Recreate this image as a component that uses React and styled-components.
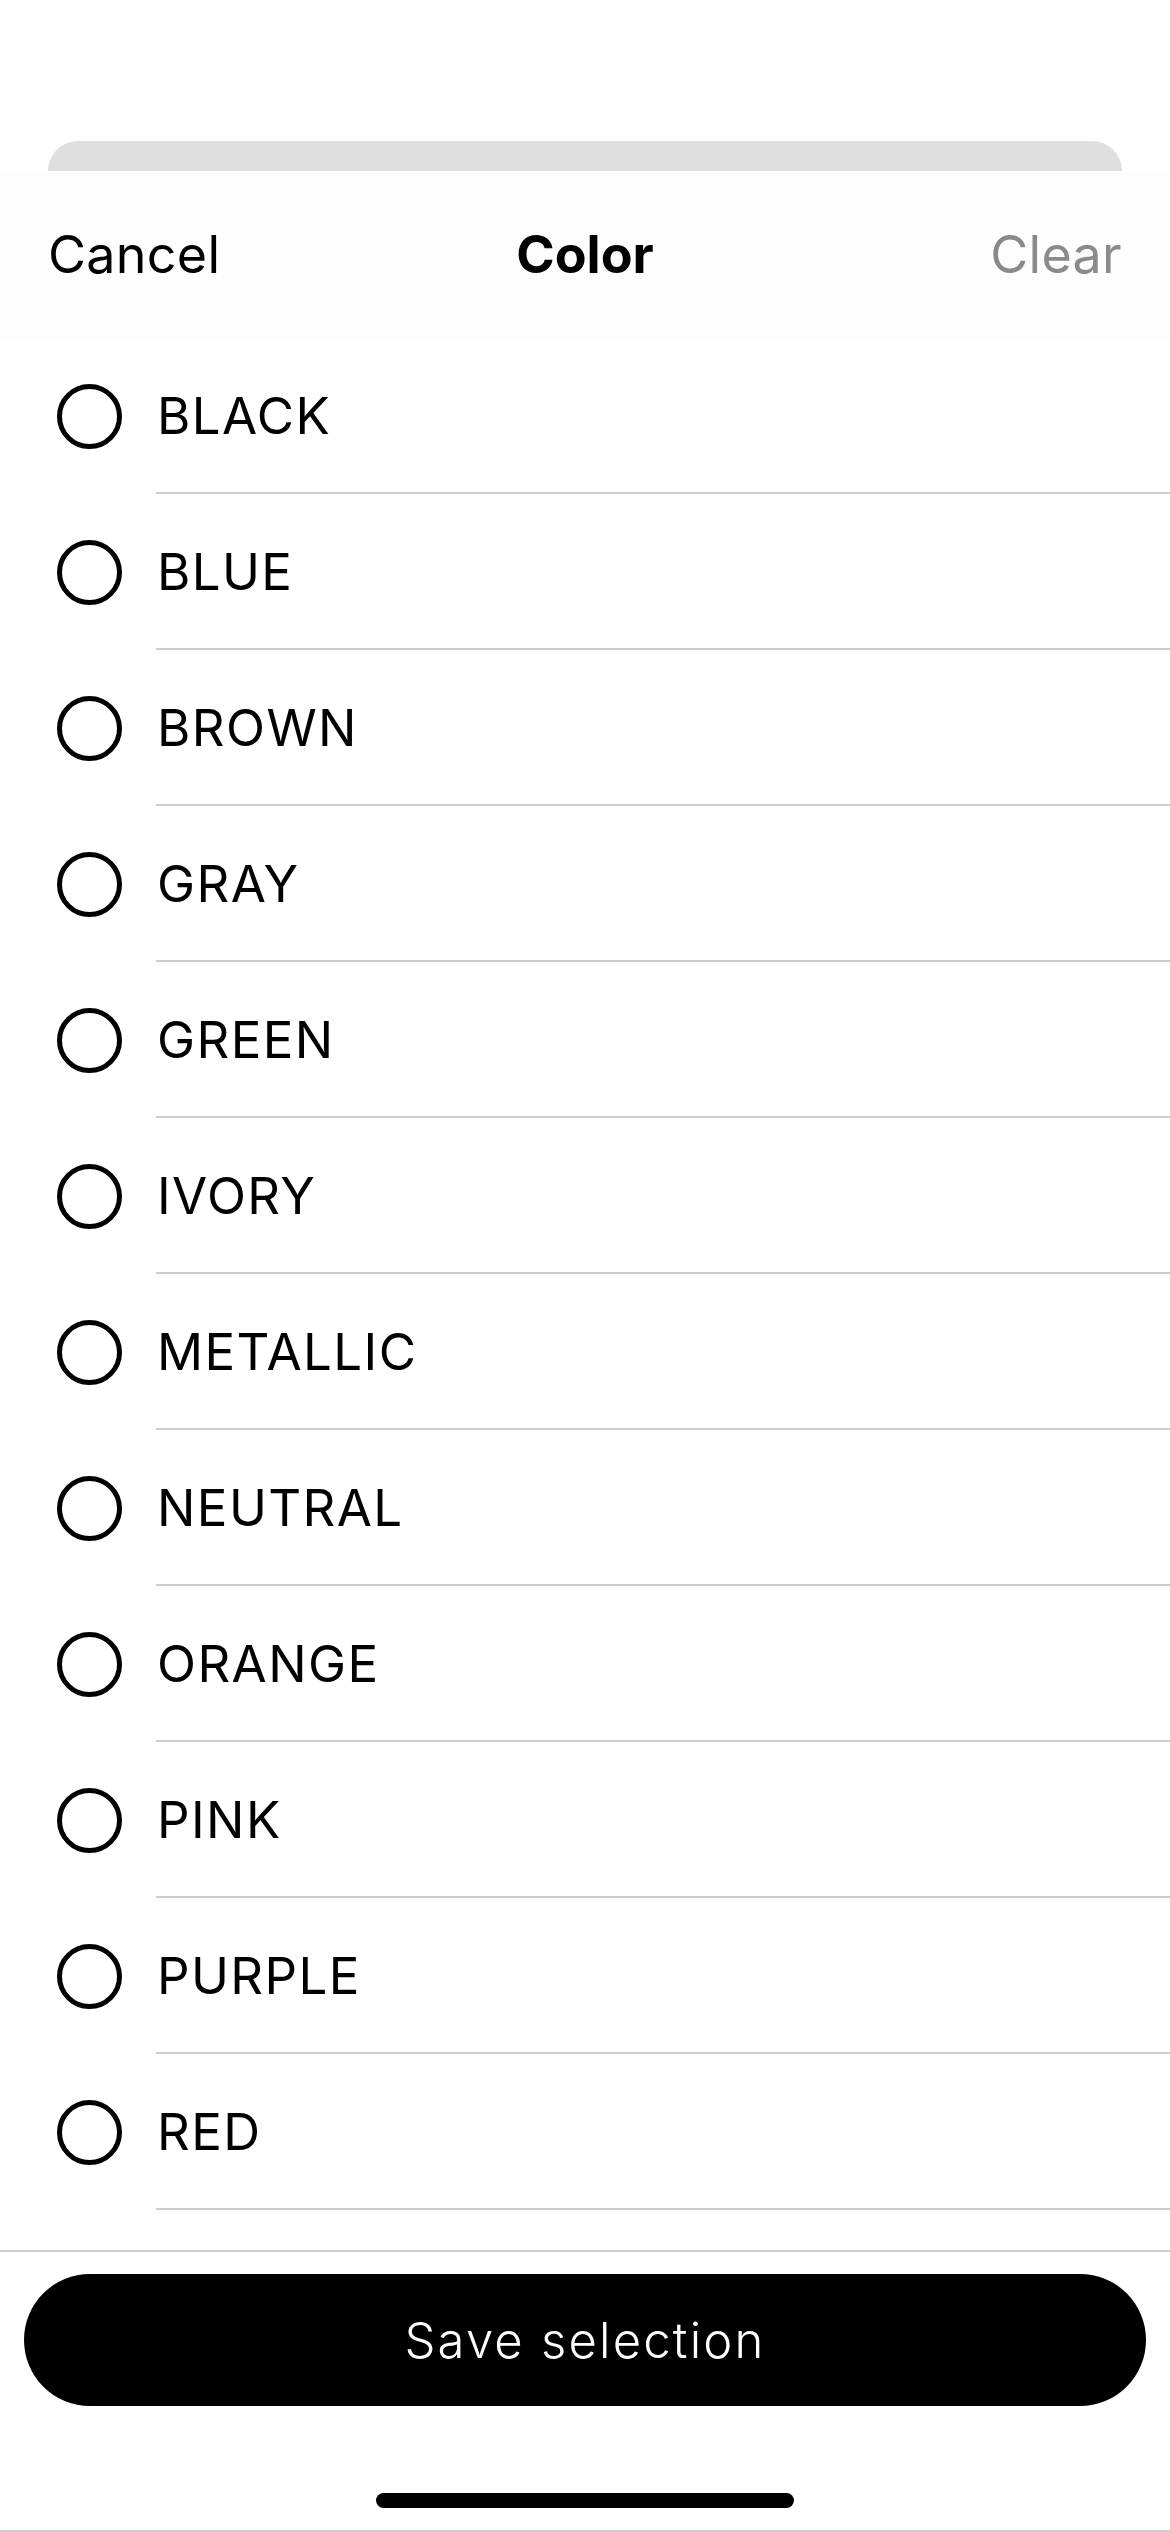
import React, { useState } from "react";
import styled, { createGlobalStyle } from "styled-components";

const GlobalStyle = createGlobalStyle`
  html, body {
    margin: 0;
    padding: 0;
    background: #ffffff;
  }
  body {
    font-family: Inter, "Liberation Sans", sans-serif;
    color: #000;
  }
  * {
    box-sizing: border-box;
  }
`;

const Screen = styled.div`
  width: 1170px;
  height: 2532px;
  display: flex;
  flex-direction: column;
  overflow: hidden;
  background: #fff;
`;

const TopSpace = styled.div`
  height: 141px;
  flex-shrink: 0;
`;

const BackSheet = styled.div`
  height: 30px;
  margin: 0 48px;
  flex-shrink: 0;
  background: #dfdfdf;
  border-radius: 30px 30px 0 0;
`;

const Header = styled.div`
  height: 167px;
  flex-shrink: 0;
  display: grid;
  grid-template-columns: 1fr auto 1fr;
  align-items: center;
  padding: 0 48px;
  background: #fdfdfd;
`;

const HeaderButton = styled.button`
  border: none;
  background: none;
  padding: 0;
  font-family: inherit;
  font-size: 52px;
  font-weight: 400;
  letter-spacing: 0.3px;
  color: ${(p) => (p.muted ? "#8a8a8a" : "#000")};
  justify-self: ${(p) => (p.end ? "end" : "start")};
  cursor: pointer;
`;

const Title = styled.div`
  font-size: 52px;
  font-weight: 700;
  color: #000;
`;

const List = styled.div`
  flex: 1;
  overflow: hidden;
`;

const Row = styled.label`
  display: flex;
  height: 156px;
  cursor: pointer;
`;

const RadioCell = styled.div`
  width: 156px;
  flex-shrink: 0;
  display: flex;
  align-items: center;
  padding-left: 57px;
`;

const Radio = styled.div`
  width: 65px;
  height: 65px;
  border-radius: 50%;
  border: 5px solid #000;
  display: flex;
  align-items: center;
  justify-content: center;

  &::after {
    content: "";
    width: ${(p) => (p.checked ? "33px" : "0")};
    height: ${(p) => (p.checked ? "33px" : "0")};
    border-radius: 50%;
    background: #000;
  }
`;

const Label = styled.div`
  flex: 1;
  display: flex;
  align-items: center;
  padding-left: 1px;
  border-bottom: 2px solid #cccccc;
  font-size: 51px;
  font-weight: 400;
  letter-spacing: 1.4px;
  color: #000;
`;

const Footer = styled.div`
  flex-shrink: 0;
  border-top: 2px solid #cccccc;
  padding: 22px 24px 0;
  display: flex;
  flex-direction: column;
  align-items: center;
  border-bottom: 2px solid #cccccc;
`;

const SaveButton = styled.button`
  width: 100%;
  height: 132px;
  border: none;
  border-radius: 66px;
  background: #000;
  color: #fff;
  font-family: inherit;
  font-size: 49px;
  font-weight: 300;
  letter-spacing: 2.2px;
  cursor: pointer;
`;

const HomeIndicator = styled.div`
  width: 418px;
  height: 15px;
  border-radius: 8px;
  background: #000;
  margin: 87px 0 22px;
`;

const colors = [
  "BLACK",
  "BLUE",
  "BROWN",
  "GRAY",
  "GREEN",
  "IVORY",
  "METALLIC",
  "NEUTRAL",
  "ORANGE",
  "PINK",
  "PURPLE",
  "RED",
];

export default function App() {
  const [selected, setSelected] = useState([]);

  const toggle = (c) => {
    setSelected((s) => (s.includes(c) ? s.filter((x) => x !== c) : [...s, c]));
  };

  return (
    <>
      <GlobalStyle />
      <Screen>
        <TopSpace />
        <BackSheet />
        <Header>
          <HeaderButton>Cancel</HeaderButton>
          <Title>Color</Title>
          <HeaderButton muted end onClick={() => setSelected([])}>
            Clear
          </HeaderButton>
        </Header>
        <List>
          {colors.map((c) => (
            <Row key={c} onClick={() => toggle(c)}>
              <RadioCell>
                <Radio checked={selected.includes(c)} />
              </RadioCell>
              <Label>{c}</Label>
            </Row>
          ))}
        </List>
        <Footer>
          <SaveButton>Save selection</SaveButton>
          <HomeIndicator />
        </Footer>
      </Screen>
    </>
  );
}
